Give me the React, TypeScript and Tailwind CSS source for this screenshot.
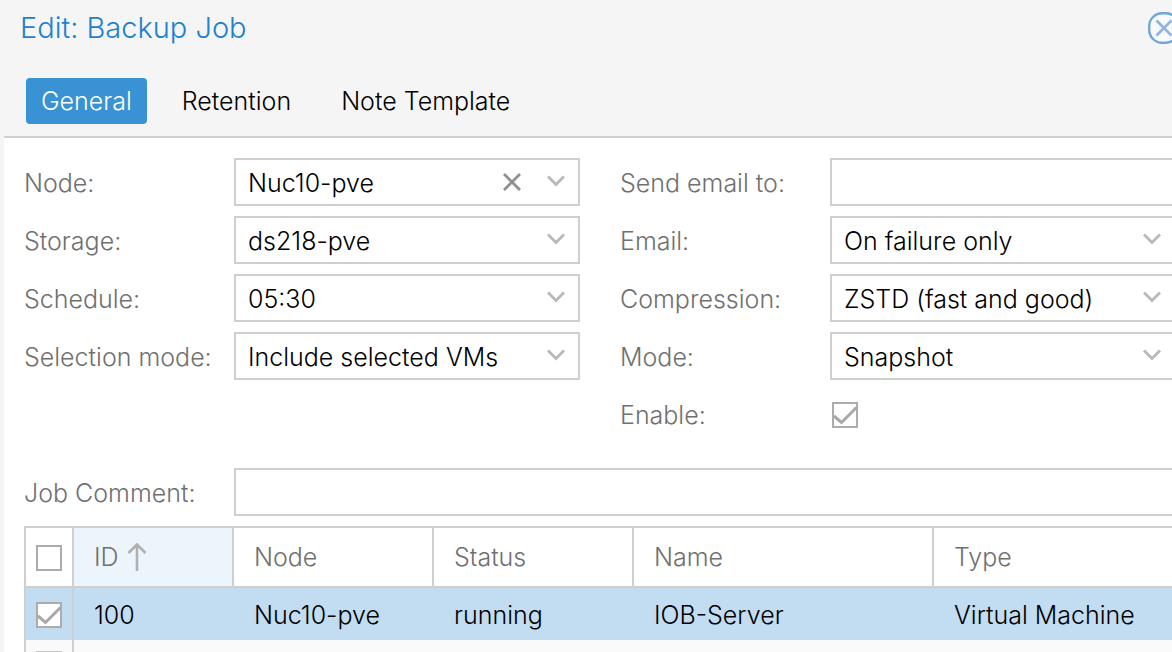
import { useState } from "react";
import type { ReactNode } from "react";

const control =
  "h-12 w-full appearance-none rounded-none border-2 border-[#cfcfcf] bg-white pl-3 pt-0.5 text-black outline-none";

function Field({ id, label, children }: { id: string; label: string; children: ReactNode }) {
  return (
    <div className="flex h-12 items-center">
      <label htmlFor={id} className="w-[210px] shrink-0 whitespace-nowrap pt-0.5 text-[#707070]">
        {label}
      </label>
      <div className="relative flex min-w-0 grow items-center">{children}</div>
    </div>
  );
}

function Chevron() {
  return (
    <svg
      className="pointer-events-none absolute right-3.5 top-3 size-5"
      viewBox="0 0 20 20"
      fill="none"
      stroke="#b9b9b9"
      strokeWidth="2.8"
    >
      <path d="M2 6.5 L10 14.5 L18 6.5" />
    </svg>
  );
}

function Combo({ id, label, value, clearable }: { id: string; label: string; value: string; clearable?: boolean }) {
  return (
    <Field id={id} label={label}>
      <select id={id} defaultValue={value} className={control}>
        <option value={value}>{value}</option>
      </select>
      {clearable && (
        <button type="button" aria-label="Clear" className="absolute right-14 top-3 size-6">
          <svg viewBox="0 0 24 24" fill="none" stroke="#909090" strokeWidth="2.8">
            <path d="M4 4 L20 20 M20 4 L4 20" />
          </svg>
        </button>
      )}
      <Chevron />
    </Field>
  );
}

function Tick({ id, label, initial }: { id?: string; label?: string; initial?: boolean }) {
  const [on, setOn] = useState(Boolean(initial));
  return (
    <span className="relative block size-[26px] shrink-0">
      <input
        id={id}
        type="checkbox"
        aria-label={label}
        checked={on}
        onChange={() => setOn(!on)}
        className="block size-[26px] appearance-none border-2 border-[#acacac] bg-white"
      />
      {on && (
        <svg
          className="pointer-events-none absolute inset-0 size-[26px]"
          viewBox="0 0 26 26"
          fill="none"
          stroke="#a8a8a8"
          strokeWidth="3"
        >
          <path d="M2 14 L9.5 20.5 L24.5 5.5" />
        </svg>
      )}
    </span>
  );
}

const heading = "border-b-2 border-r-2 border-[#cfcfcf] pl-5 text-left font-light";
const cell = "whitespace-nowrap pl-5 pt-0.5";

export default function App() {
  return (
    <div className="min-h-screen overflow-hidden bg-[#f5f5f5] font-['Inter',sans-serif] text-[25px] leading-[30px] font-light">
      <header className="flex h-14 items-center justify-between pl-5">
        <h1 className="text-[29px] leading-9 text-[#1c82cf]">Edit: Backup Job</h1>
        <button type="button" aria-label="Close" className="-mr-2 size-8 shrink-0">
          <svg viewBox="0 0 32 32" fill="none">
            <rect x="1.2" y="1.2" width="29.6" height="29.6" rx="13" fill="#f8f9fb" stroke="#6ea6d8" strokeWidth="2.4" />
            <path d="M8.5 8.5 L23.5 23.5 M23.5 8.5 L8.5 23.5" stroke="#8fb2e4" strokeWidth="2.6" />
          </svg>
        </button>
      </header>

      <nav className="flex h-20 items-center gap-5 pb-3 pl-[26px] pt-[22px]">
        <button type="button" className="h-[46px] rounded bg-[#3892d4] px-[15px] text-white">
          General
        </button>
        <button type="button" className="h-[46px] px-[15px] text-black">
          Retention
        </button>
        <button type="button" className="h-[46px] px-[15px] text-black">
          Note Template
        </button>
      </nav>

      <main className="-mr-1 ml-1 min-h-[516px] border-t-2 border-[#cfcfcf] bg-white pl-5 pt-5">
        <form>
          <div className="grid grid-cols-2 gap-x-10">
            <div className="flex flex-col gap-2.5">
              <Combo id="node" label="Node:" value="Nuc10-pve" clearable />
              <Combo id="storage" label="Storage:" value="ds218-pve" />
              <Combo id="schedule" label="Schedule:" value="05:30" />
              <Combo id="selection" label="Selection mode:" value="Include selected VMs" />
            </div>
            <div className="flex flex-col gap-2.5">
              <Field id="mailto" label="Send email to:">
                <input id="mailto" type="text" className={control} />
              </Field>
              <Combo id="email" label="Email:" value="On failure only" />
              <Combo id="compression" label="Compression:" value="ZSTD (fast and good)" />
              <Combo id="mode" label="Mode:" value="Snapshot" />
              <Field id="enable" label="Enable:">
                <span className="pl-0.5 pt-0.5">
                  <Tick id="enable" initial />
                </span>
              </Field>
            </div>
          </div>
          <div className="mt-[30px]">
            <Field id="comment" label="Job Comment:">
              <input id="comment" type="text" className={control} />
            </Field>
          </div>
        </form>

        <table className="mt-2.5 w-full table-fixed border-separate border-spacing-0 border-l-2 border-t-2 border-[#cfcfcf]">
          <colgroup>
            <col className="w-12" />
            <col className="w-40" />
            <col className="w-[200px]" />
            <col className="w-[200px]" />
            <col className="w-[300px]" />
            <col />
          </colgroup>
          <thead className="text-[#707070]">
            <tr className="h-[60px]">
              <th className="border-b-2 border-r-2 border-[#cfcfcf] pl-2.5 pt-0.5">
                <Tick label="Select all" />
              </th>
              <th className={`${heading} bg-[#edf5fc]`}>
                <span className="flex items-center gap-2">
                  ID
                  <svg className="h-7 w-5" viewBox="0 0 20 28" fill="none" stroke="#b0b0b0" strokeWidth="2.6">
                    <path d="M10 28 V2 M1.5 10 L10 1.5 L18.5 10" />
                  </svg>
                </span>
              </th>
              <th className={heading}>Node</th>
              <th className={heading}>Status</th>
              <th className={heading}>Name</th>
              <th className={heading}>Type</th>
            </tr>
          </thead>
          <tbody>
            <tr className="h-[52px] bg-[#c2dcf1] text-black">
              <td className="border-r-2 border-[#cfcfcf] pl-2.5 pt-0.5">
                <Tick label="Select 100" initial />
              </td>
              <td className={cell}>100</td>
              <td className={cell}>Nuc10-pve</td>
              <td className={cell}>running</td>
              <td className={cell}>IOB-Server</td>
              <td className={cell}>Virtual Machine</td>
            </tr>
            <tr className="bg-[#fafafa]">
              <td className="h-3 border-r-2 border-[#cfcfcf] pl-2.5 align-bottom">
                <span className="block h-px w-[26px] bg-[#c4c4c4]" />
              </td>
              <td colSpan={5} />
            </tr>
          </tbody>
        </table>
      </main>
    </div>
  );
}
